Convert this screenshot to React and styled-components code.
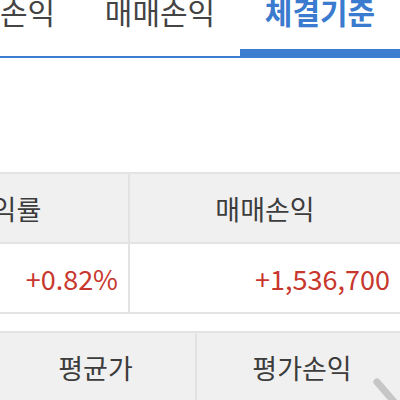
import React from "react";
import styled, { createGlobalStyle } from "styled-components";

const GlobalStyle = createGlobalStyle`
  body {
    margin: 0;
    background: #ffffff;
    font-family: "Noto Sans CJK KR", "Noto Sans", sans-serif;
    overflow: hidden;
  }
`;

const Page = styled.div`
  position: relative;
  width: 400px;
  height: 400px;
  overflow: hidden;
  background: #ffffff;
`;

const TabBar = styled.div`
  display: flex;
  margin: -4px 0 0 -80px;
  border-bottom: 2px solid #3d7dd0;
`;

const Tab = styled.div`
  flex: 0 0 160px;
  height: 53px;
  display: flex;
  justify-content: center;
  align-items: flex-start;
  font-size: 30px;
  line-height: 30px;
  color: ${({ active }) => (active ? "#3a7bd0" : "#444444")};
  font-weight: ${({ active }) => (active ? 700 : 400)};
  border-bottom: 7px solid ${({ active }) => (active ? "#3d7dd0" : "transparent")};
  white-space: nowrap;
`;

const Table = styled.div`
  display: grid;
  grid-template-columns: ${({ cols }) => cols};
  margin-left: ${({ shift }) => shift};
  margin-top: ${({ top }) => top};
  border-top: 2px solid #e3e3e3;
`;

const HeadCell = styled.div`
  height: 68px;
  display: flex;
  align-items: center;
  justify-content: center;
  background: #f0f0f0;
  border-bottom: 2px solid #e3e3e3;
  border-right: ${({ last }) => (last ? "none" : "2px solid #e3e3e3")};
  font-size: 27px;
  color: #3c3c3c;
  white-space: nowrap;
`;

const ValueCell = styled.div`
  height: 68px;
  display: flex;
  align-items: center;
  justify-content: flex-end;
  padding-right: 10px;
  border-bottom: 2px solid #e3e3e3;
  border-right: ${({ last }) => (last ? "none" : "2px solid #e3e3e3")};
  font-size: 27px;
  color: #c8372d;
  white-space: nowrap;
`;

const Scroll = styled.svg`
  position: absolute;
  right: 0;
  bottom: 0;
`;

export default function App() {
  return (
    <Page>
      <GlobalStyle />
      <TabBar>
        <Tab>평가손익</Tab>
        <Tab>매매손익</Tab>
        <Tab active>체결기준</Tab>
      </TabBar>
      <Table cols="250px 270px" shift="-120px" top="114px">
        <HeadCell>수익률</HeadCell>
        <HeadCell last>매매손익</HeadCell>
        <ValueCell>+0.82%</ValueCell>
        <ValueCell last>+1,536,700</ValueCell>
      </Table>
      <Table cols="201px 210px" shift="-4px" top="17px">
        <HeadCell>평균가</HeadCell>
        <HeadCell last>평가손익</HeadCell>
      </Table>
      <Scroll width="30" height="24" viewBox="0 0 30 24">
        <line x1="7" y1="6" x2="26" y2="28" stroke="#c6c6c6" strokeWidth="7" strokeLinecap="round" />
      </Scroll>
    </Page>
  );
}
